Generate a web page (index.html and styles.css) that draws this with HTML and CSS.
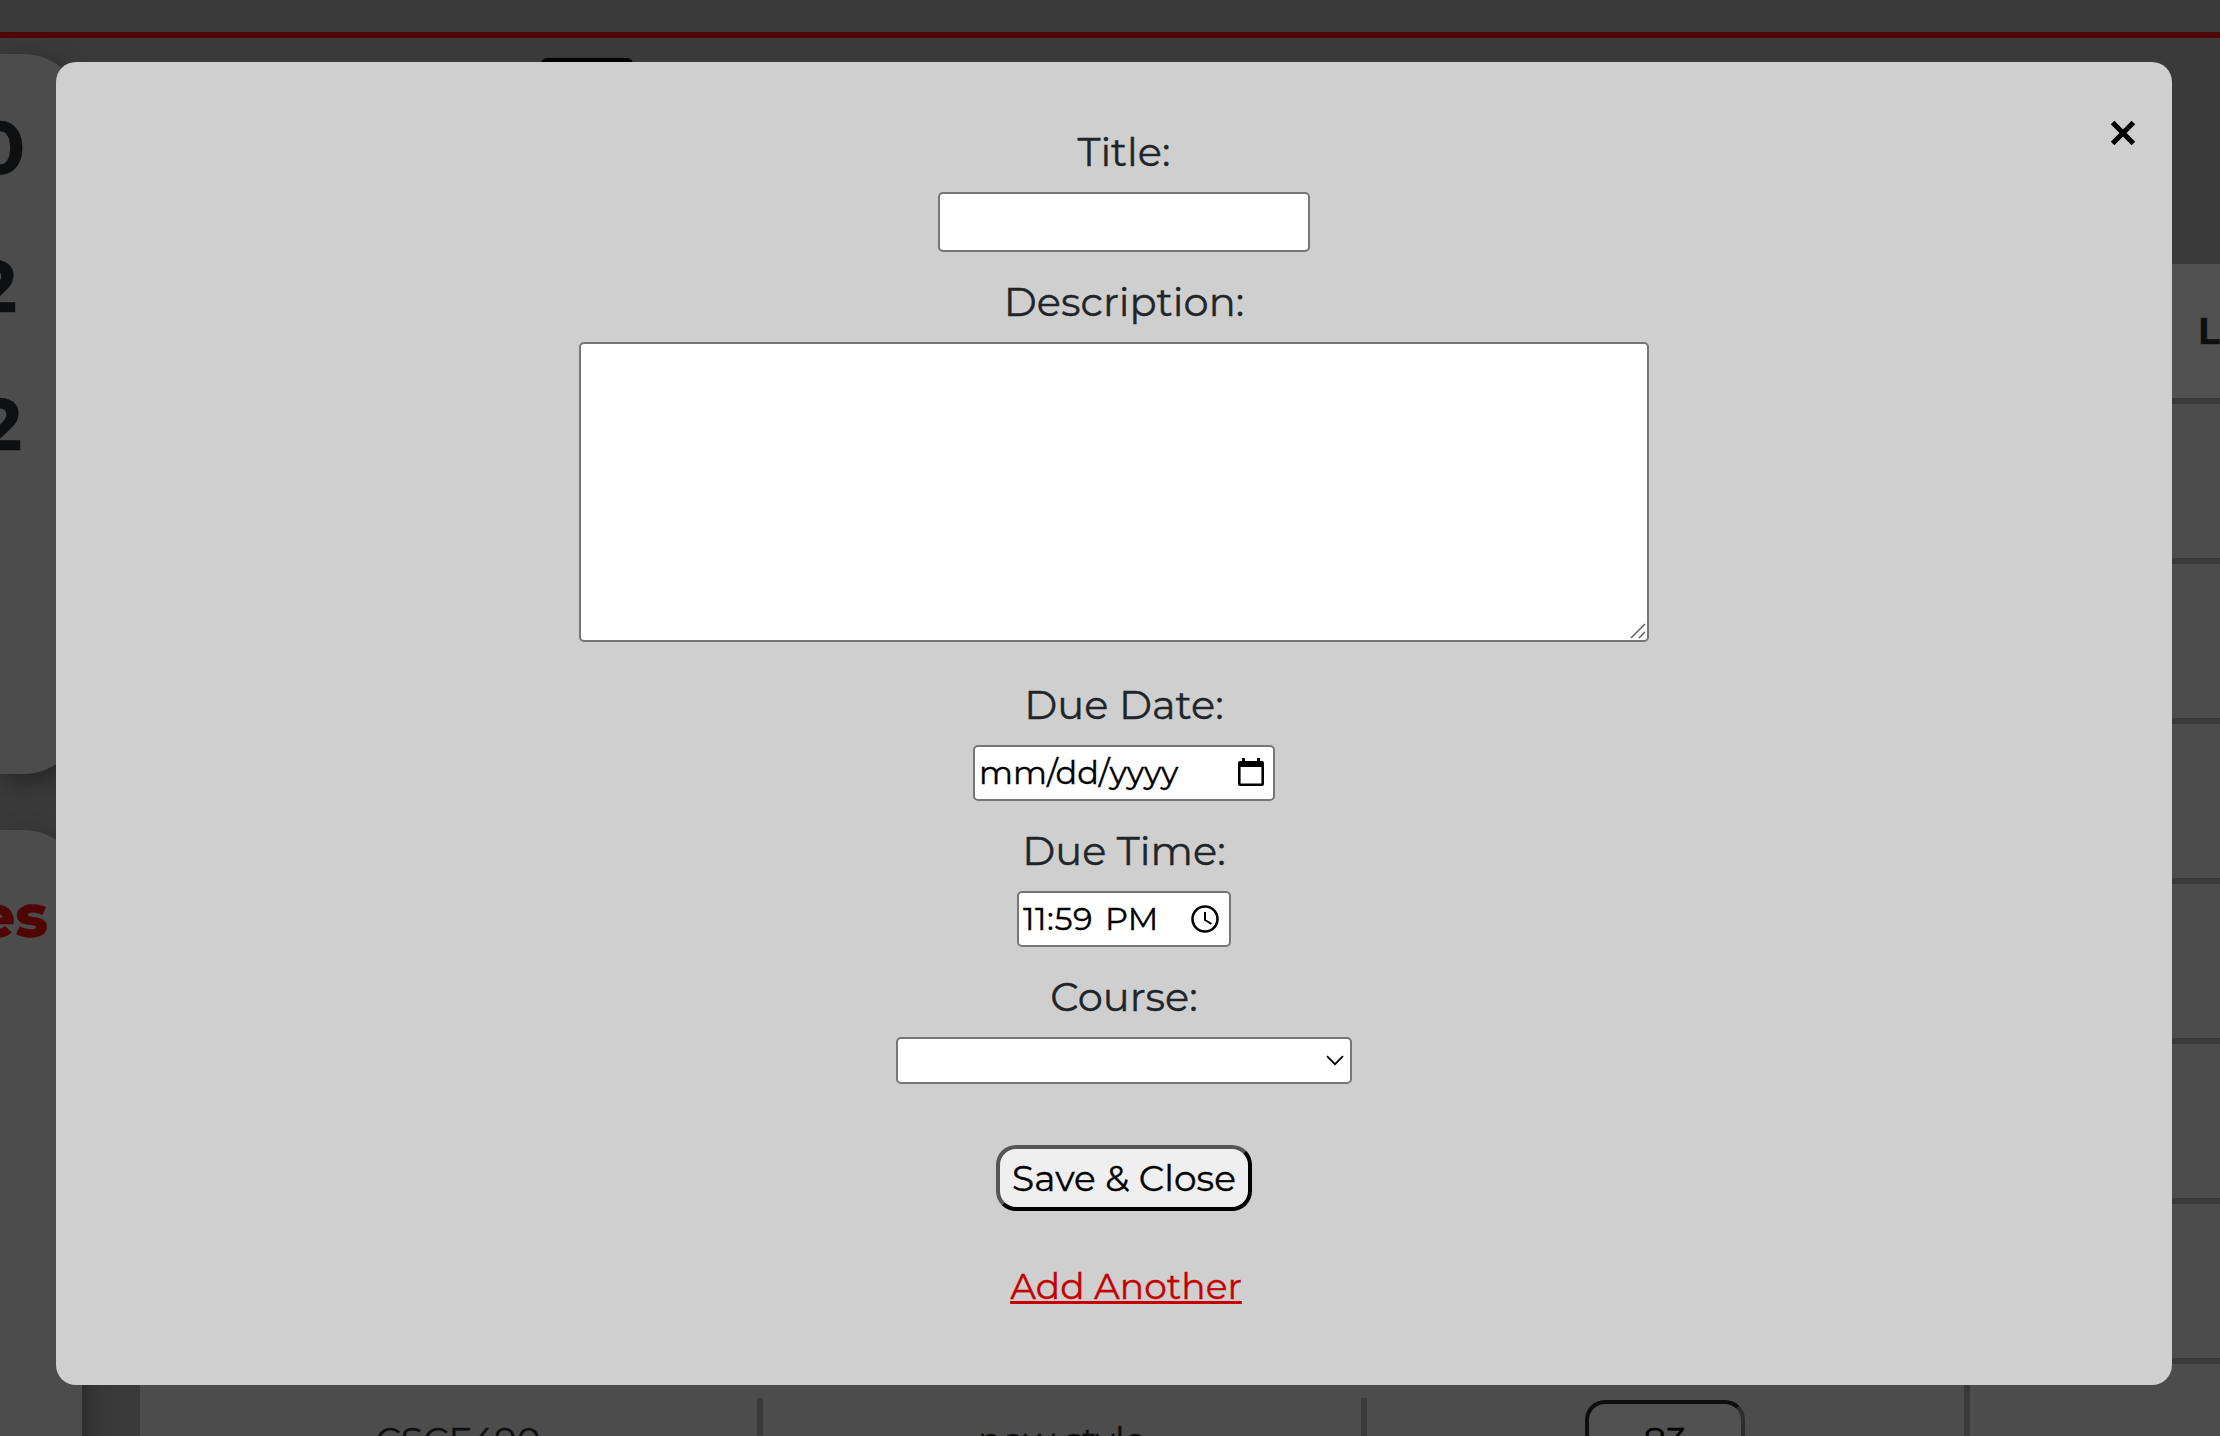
FILE: index.html
```html
<!DOCTYPE html>
<html lang="en">
<head>
<meta charset="utf-8">
<title>Assignments</title>
<link rel="stylesheet" href="styles.css">
</head>
<body>
<div class="page">
  <header class="topbar"></header>
  <div class="content">
    <aside class="sidebar">
      <section class="card stats">
        <div class="stat stat-a">0</div>
        <div class="stat stat-b">2</div>
        <div class="stat stat-c">2</div>
      </section>
      <section class="card courses"><h2 class="courses-title">es</h2></section>
    </aside>
    <main class="main">
      <div class="tab"></div>
      <div class="table">
        <div class="left-cells">
          <div class="cell code">CSCE490</div>
          <div class="cell">new style</div>
          <div class="cell last"><span class="grade">83</span></div>
        </div>
        <div class="right-cells">
          <div class="head">L</div>
          <div class="row"></div><div class="row"></div><div class="row"></div>
          <div class="row"></div><div class="row"></div><div class="row"></div>
          <div class="row end"></div>
        </div>
      </div>
    </main>
  </div>
</div>
<div class="modal">
  <button class="close" aria-label="Close"><svg width="26" height="26" viewBox="0 0 26 26"><path d="M2.6 2.4L23.4 23.6M23.4 2.4L2.6 23.6" stroke="#000" stroke-width="5"/></svg></button>
  <form class="form">
    <label class="label">Title:</label>
    <div class="field f-title"></div>
    <label class="label">Description:</label>
    <div class="field f-desc"><svg width="16" height="16" viewBox="0 0 16 16"><path d="M1 15L15 1M9 15L15 9" stroke="#666" stroke-width="1.6"/></svg></div>
    <label class="label">Due Date:</label>
    <div class="field f-date"><span class="value">mm/dd/yyyy</span><svg width="26" height="28" viewBox="0 0 26 28"><path fill="#000" fill-rule="evenodd" d="M4 0h3v3h12V0h3v3h2q2 0 2 2v21q0 2-2 2H2q-2 0-2-2V5q0-2 2-2h2zM2.6 9v16.4h20.8V9z"/></svg></div>
    <label class="label">Due Time:</label>
    <div class="field f-time"><span class="value time">11:59</span><span class="value meridiem">PM</span><svg width="28" height="28" viewBox="0 0 28 28" fill="none" stroke="#000"><circle cx="14" cy="14" r="12.5" stroke-width="2.6"/><path d="M14 7v8l6.5 4" stroke-width="2"/></svg></div>
    <label class="label">Course:</label>
    <div class="field f-course"><svg width="18" height="11" viewBox="0 0 18 11"><path d="M1 1.2L9 9.2L17 1.2" fill="none" stroke="#000" stroke-width="1.8"/></svg></div>
    <button type="button" class="save">Save &amp; Close</button>
    <a class="another">Add Another</a>
  </form>
</div>
</body>
</html>
```
FILE: styles.css
```css
* { box-sizing: border-box; }
body {
  margin: 0;
  width: 2220px;
  height: 1436px;
  overflow: hidden;
  position: relative;
  background: #3a3a3a;
  color: #212529;
  font-family: Montserrat, Inter, sans-serif;
  -webkit-text-stroke: .35px currentColor;
}
.page { height: 1436px; overflow: hidden; }
.topbar { height: 38px; border-bottom: 6px solid #4f0505; }
.content { display: flex; height: 1398px; }

.sidebar { width: 82px; flex: none; padding-top: 16px; }
.card { background: #4c4c4c; box-shadow: 4px 8px 24px rgba(0, 0, 0, .35); }
.stats { height: 720px; border-radius: 0 58px 58px 0; padding-top: 50px; }
.stat {
  display: flex;
  justify-content: flex-end;
  height: 138px;
  line-height: 87px;
  font-size: 73px;
  font-weight: 700;
  color: #0d0f10;
}
.stat-a { width: 25px; }
.stat-b { width: 17px; }
.stat-c { width: 22px; }
.courses { height: 700px; margin-top: 56px; border-radius: 0 58px 0 0; padding-top: 50px; }
.courses-title {
  display: flex;
  justify-content: flex-end;
  width: 48px;
  margin: 0;
  font-size: 60px;
  line-height: 72px;
  font-weight: 800;
  color: #4f0505;
}

.main { flex: 1; padding: 20px 0 0 58px; }
.tab { width: 92px; height: 206px; margin-left: 401px; background: #000; border-radius: 6px 6px 0 0; }
.table { display: flex; height: 1172px; }
.left-cells {
  display: grid;
  grid-template-columns: 623px 604px 1fr;
  width: 1830px;
  padding-top: 1134px;
  background: #4c4c4c;
  border-right: 6px solid #3a3a3a;
}
.cell {
  display: flex;
  justify-content: center;
  height: 60px;
  padding-top: 22px;
  border-right: 6px solid #3a3a3a;
  font-size: 36px;
  line-height: 40px;
  color: #0d0f10;
}
.cell.code { padding-left: 19px; }
.cell.last { border: 0; padding-top: 2px; padding-right: 2px; }
.grade {
  width: 160px;
  height: 80px;
  padding: 16px 0 0 1px;
  border: 4px solid;
  border-color: #0e0e0e #2e2e2e #2e2e2e #0e0e0e;
  border-radius: 20px;
  background: #515151;
  text-align: center;
  color: #000;
}
.right-cells { flex: 1; }
.head {
  height: 140px;
  padding: 43px 0 0 228px;
  border-bottom: 6px solid #3a3a3a;
  background: #515151;
  font-size: 36px;
  line-height: 48px;
  font-weight: 700;
  color: #0d0f10;
}
.row { height: 160px; border-bottom: 6px solid #3a3a3a; background: #4c4c4c; }
.row.end { border: 0; }

.modal {
  position: absolute;
  left: 56px;
  top: 62px;
  width: 2116px;
  height: 1323px;
  padding: 60px 0 0 20px;
  border-radius: 20px;
  background: #cfcfcf;
}
.close { position: absolute; right: 36px; top: 58px; width: 26px; height: 26px; padding: 0; border: 0; background: none; }
svg { display: block; flex: none; }
.form { display: flex; flex-direction: column; align-items: center; }
.label { height: 60px; margin-bottom: 10px; font-size: 40px; line-height: 60px; white-space: nowrap; }
.field {
  display: flex;
  align-items: center;
  margin-bottom: 20px;
  border: 2px solid #767676;
  border-radius: 5px;
  background: #fff;
  color: #000;
  font-size: 32px;
  white-space: nowrap;
}
.value { padding-bottom: 2px; }
.f-title { width: 372px; height: 60px; }
.f-desc { width: 1070px; height: 300px; margin: 0 20px 33px 0; align-items: flex-end; justify-content: flex-end; padding: 0 1px 1px 0; }
.f-date { width: 302px; height: 56px; padding: 0 9px 0 4px; justify-content: space-between; }
.f-date svg { margin-bottom: 2px; }
.f-time { width: 214px; height: 56px; padding: 0 10px 0 4px; }
.f-time svg { margin-left: auto; }
.time { letter-spacing: .5px; }
.meridiem { margin-left: 12px; }
.f-course { width: 456px; height: 47px; margin-bottom: 61px; padding: 0 6px 1px 0; justify-content: flex-end; }
.save {
  width: 256px;
  height: 66px;
  padding: 0;
  border: 4px solid;
  border-color: #555 #000 #000 #555;
  border-radius: 20px;
  background: #efefef;
  color: #000;
  font: 36px/44px Montserrat, Inter, sans-serif;
  white-space: nowrap;
}
.another {
  margin: 53px 0 0 4px;
  font-size: 36px;
  line-height: 44px;
  color: #c60000;
  text-decoration: underline;
  text-decoration-thickness: 3px;
  text-underline-offset: 2px;
  text-decoration-skip-ink: none;
}
```
